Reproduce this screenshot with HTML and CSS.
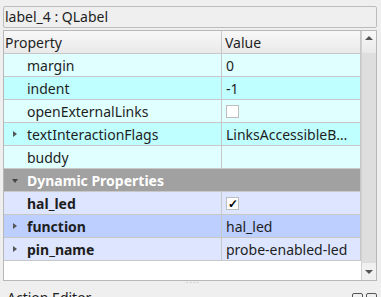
FILE: index.html
```html
<!DOCTYPE html>
<html lang="en">
<head>
    <meta charset="UTF-8">
    <title>Property Editor</title>
    <link rel="stylesheet" href="styles.css">
</head>
<body>
    <div class="objectName">label_4 : QLabel</div>

    <div class="editor">
        <table class="props">
            <thead>
                <tr><th class="col-name">Property</th><th>Value</th></tr>
            </thead>
            <tbody>
                <tr class="cyan-a"><td class="name">margin</td><td>0</td></tr>
                <tr class="cyan-b"><td class="name">indent</td><td>-1</td></tr>
                <tr class="cyan-a"><td class="name">openExternalLinks</td><td><span class="check"></span></td></tr>
                <tr class="cyan-b"><td class="name"><span class="arrow closed"></span>textInteractionFlags</td><td>LinksAccessibleB…</td></tr>
                <tr class="cyan-a"><td class="name">buddy</td><td></td></tr>
                <tr class="group"><td colspan="2"><span class="arrow open"></span>Dynamic Properties</td></tr>
                <tr class="blue-a"><td class="name bold">hal_led</td><td><span class="check">&#10003;</span></td></tr>
                <tr class="blue-b"><td class="name bold"><span class="arrow closed"></span>function</td><td>hal_led</td></tr>
                <tr class="blue-a"><td class="name bold"><span class="arrow closed"></span>pin_name</td><td>probe-enabled-led</td></tr>
            </tbody>
        </table>
        <div class="scrollbar">
            <div class="sb-btn top"><span class="sb-up"></span></div>
            <div class="sb-thumb"></div>
            <div class="sb-btn"><span class="sb-down"></span></div>
        </div>
    </div>

    <div class="grip">· · · ·</div>

    <div class="dock">
        <span class="dock-title">Action Editor</span>
        <span class="dock-buttons"><span class="dock-btn"></span><span class="dock-btn"></span></span>
    </div>
</body>
</html>
```

FILE: styles.css
```css
body {
    margin: 0;
    background-color: #efefef;
    font-family: "Noto Sans", sans-serif;
    font-size: 14px;
    color: #1e1e1e;
    overflow: hidden;
    height: 297px;
}
.objectName {
    margin: 6px 4px 0 3px;
    height: 20px;
    line-height: 20px;
    padding-left: 1px;
    border: 1px solid #bcbcbc;
    border-radius: 2px;
}
.editor {
    display: flex;
    margin: 2px 4px 0 3px;
    height: 249px;
    border: 1px solid #b8b8b8;
    background-color: #fff;
}
.props {
    flex: 1;
    align-self: flex-start;
    border-collapse: collapse;
    table-layout: fixed;
}
.props th {
    height: 22px;
    text-align: left;
    font-weight: normal;
    padding: 0 0 0 3px;
    background: linear-gradient(#f8f8f8, #e9e9e9);
    border-right: 1px solid #c8c8c8;
    border-bottom: 1px solid #c8c8c8;
}
.props th.col-name {
    width: 216px;
    padding-left: 1px;
}
.props td {
    height: 22px;
    padding: 0 0 0 4px;
    white-space: nowrap;
    overflow: hidden;
    border-right: 1px solid #c8c8c8;
    border-bottom: 1px solid #c8c8c8;
}
.props td.name {
    padding-left: 23px;
    position: relative;
}
.bold {
    font-weight: bold;
}
.cyan-a { background-color: #e0ffff; }
.cyan-b { background-color: #c0ffff; }
.blue-a { background-color: #dde5ff; }
.blue-b { background-color: #bccfff; }
.group td {
    background-color: #a1a1a1;
    color: #fff;
    font-weight: bold;
    padding-left: 23px;
    position: relative;
}
.arrow {
    position: absolute;
    left: 9px;
    top: 8px;
    width: 0;
    height: 0;
}
.arrow.closed {
    border-top: 3px solid transparent;
    border-bottom: 3px solid transparent;
    border-left: 4px solid #555;
}
.arrow.open {
    top: 10px;
    left: 8px;
    border-left: 3px solid transparent;
    border-right: 3px solid transparent;
    border-top: 4px solid #444;
}
.check {
    display: inline-flex;
    align-items: center;
    justify-content: center;
    width: 11px;
    height: 11px;
    border: 1px solid #bdbdbd;
    background-color: #fff;
    vertical-align: middle;
    font-size: 12px;
    font-weight: bold;
    color: #000;
    line-height: 1;
    margin-top: -2px;
}
.scrollbar {
    width: 14px;
    display: flex;
    flex-direction: column;
    border-left: 1px solid #d0d0d0;
    background-color: #dcdcdc;
}
.sb-btn {
    height: 17px;
    display: flex;
    align-items: center;
    justify-content: center;
    background-color: #f0f0f0;
}
.sb-btn.top {
    height: 22px;
    align-items: flex-start;
    padding-top: 5px;
    box-sizing: border-box;
    background: linear-gradient(#f8f8f8, #e9e9e9);
}
.sb-thumb {
    flex: 1;
    background-color: #dedede;
}
.sb-up {
    border-left: 4px solid transparent;
    border-right: 4px solid transparent;
    border-bottom: 4px solid #555;
}
.sb-down {
    border-left: 4px solid transparent;
    border-right: 4px solid transparent;
    border-top: 4px solid #555;
}
.grip {
    height: 6px;
    line-height: 4px;
    text-align: center;
    font-size: 7px;
    color: #aaa;
    padding-left: 4px;
}
.dock {
    display: flex;
    justify-content: space-between;
    align-items: flex-start;
    padding: 3px 4px 0 7px;
}
.dock-title {
    line-height: 16px;
}
.dock-buttons {
    display: flex;
    gap: 3px;
    padding-top: 3px;
}
.dock-btn {
    width: 9px;
    height: 9px;
    border: 1px solid #555;
    border-radius: 2px;
}
```
